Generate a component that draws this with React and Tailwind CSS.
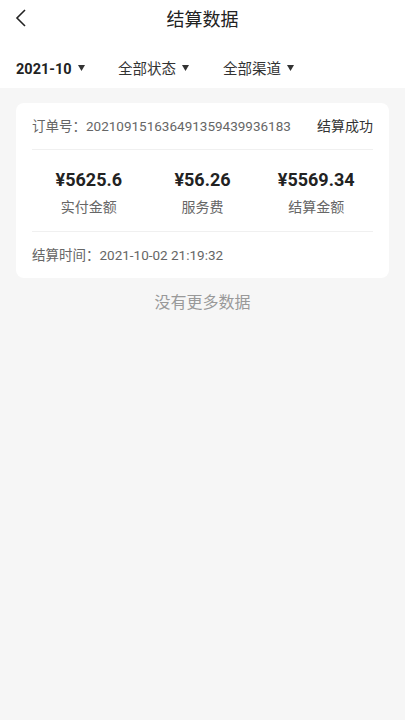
const font = { fontFamily: '"Roboto", "Noto Sans CJK SC", sans-serif' };

const Caret = () => (
  <svg width="7" height="6" viewBox="0 0 7 6" className="ml-1.5 mb-1">
    <path d="M0 0 L7 0 L3.5 6 Z" fill="#333" />
  </svg>
);

const Amount = ({ value, label }) => (
  <div className="flex flex-col items-center">
    <div className="text-[18px] font-bold text-[#222] leading-[26px]">{value}</div>
    <div className="text-[14px] text-[#666] leading-5 mt-1">{label}</div>
  </div>
);

export default function App() {
  return (
    <div className="min-h-[720px] bg-[#f6f6f6] text-[#333]" style={font}>
      {/* header */}
      <div className="bg-white">
        <div className="relative h-[38px] flex items-center justify-center">
          <svg
            className="absolute left-[14px] top-[9px]"
            width="14"
            height="18"
            viewBox="0 0 14 18"
            fill="none"
            stroke="#222"
            strokeWidth="1.6"
          >
            <path d="M11 1 L3 9 L11 17" />
          </svg>
          <div className="text-[18px] text-[#222]">结算数据</div>
        </div>
        <div className="h-[50px] pt-[14px] flex items-center px-4 text-[14.5px]">
          <div className="flex items-center font-bold text-[#222] w-[102px]">
            2021-10
            <Caret />
          </div>
          <div className="flex items-center w-[105px]">
            全部状态
            <Caret />
          </div>
          <div className="flex items-center">
            全部渠道
            <Caret />
          </div>
        </div>
      </div>

      {/* list */}
      <div className="px-4 pt-[15px]">
        <div className="bg-white rounded-lg px-4">
          <div className="flex items-center justify-between h-[46px]">
            <span className="text-[13.5px] text-[#666]">订单号：202109151636491359439936183</span>
            <span className="text-[14px] text-[#333]">结算成功</span>
          </div>
          <div className="h-px bg-[#f0f0f0]" />
          <div className="grid grid-cols-3 pt-[17px] pb-[14px]">
            <Amount value="¥5625.6" label="实付金额" />
            <Amount value="¥56.26" label="服务费" />
            <Amount value="¥5569.34" label="结算金额" />
          </div>
          <div className="h-px bg-[#f0f0f0]" />
          <div className="h-[46px] flex items-center text-[13.5px] text-[#666]">
            结算时间：2021-10-02 21:19:32
          </div>
        </div>
        <div className="text-center text-[16px] text-[#999] mt-[13px]">没有更多数据</div>
      </div>
    </div>
  );
}
